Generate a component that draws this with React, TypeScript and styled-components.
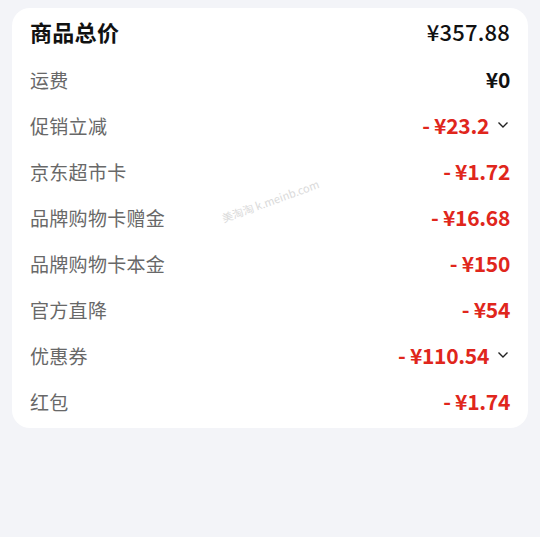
import styled, { createGlobalStyle } from 'styled-components'

const GlobalStyle = createGlobalStyle`
  html, body {
    margin: 0;
    padding: 0;
    background: #f3f4f8;
  }
  body {
    font-family: "Noto Sans CJK SC", "Noto Sans", sans-serif;
  }
`

const Page = styled.div`
  width: 540px;
  height: 537px;
  padding: 8px 12px 0;
  box-sizing: border-box;
  background: #f3f4f8;
`

const Card = styled.div`
  position: relative;
  background: #ffffff;
  border-radius: 18px;
  padding: 2px 18px 4px 18px;
  display: flex;
  flex-direction: column;
`

const Row = styled.div<{ $title?: boolean }>`
  height: 46px;
  display: flex;
  align-items: center;
  justify-content: space-between;
  box-sizing: border-box;
  padding-bottom: ${({ $title }) => ($title ? '4px' : '0')};
`

const Label = styled.span<{ $title?: boolean }>`
  font-size: ${({ $title }) => ($title ? '22px' : '19px')};
  font-weight: ${({ $title }) => ($title ? 700 : 400)};
  color: ${({ $title }) => ($title ? '#111111' : '#686868')};
  letter-spacing: 0.3px;
`

const ValueWrap = styled.div`
  display: flex;
  align-items: center;
  gap: 8px;
`

const Value = styled.span<{ $discount?: boolean; $title?: boolean }>`
  font-size: ${({ $title }) => ($title ? '22px' : '21px')};
  font-weight: ${({ $title }) => ($title ? 500 : 700)};
  color: ${({ $discount }) => ($discount ? '#e0261c' : '#111111')};
  letter-spacing: ${({ $title }) => ($title ? '0.2px' : '-0.3px')};
`

const Chevron = styled.svg`
  width: 12px;
  height: 8px;
  margin-right: 1px;
`

const Watermark = styled.span`
  position: absolute;
  left: 210px;
  top: 202px;
  font-size: 11px;
  color: #dadada;
  transform: rotate(-20deg);
  transform-origin: left center;
  white-space: nowrap;
`

type Item = { label: string; value: string; discount?: boolean; expand?: boolean }

const items: Item[] = [
  { label: '运费', value: '¥0' },
  { label: '促销立减', value: '- ¥23.2', discount: true, expand: true },
  { label: '京东超市卡', value: '- ¥1.72', discount: true },
  { label: '品牌购物卡赠金', value: '- ¥16.68', discount: true },
  { label: '品牌购物卡本金', value: '- ¥150', discount: true },
  { label: '官方直降', value: '- ¥54', discount: true },
  { label: '优惠券', value: '- ¥110.54', discount: true, expand: true },
  { label: '红包', value: '- ¥1.74', discount: true },
]

export default function App() {
  return (
    <Page>
      <GlobalStyle />
      <Card>
        <Row $title>
          <Label $title>商品总价</Label>
          <Value $title>¥357.88</Value>
        </Row>
        {items.map((it) => (
          <Row key={it.label}>
            <Label>{it.label}</Label>
            <ValueWrap>
              <Value $discount={it.discount}>{it.value}</Value>
              {it.expand && (
                <Chevron viewBox="0 0 12 8">
                  <path d="M1.5 1.5 L6 6 L10.5 1.5" fill="none" stroke="#222" strokeWidth="1.4" />
                </Chevron>
              )}
            </ValueWrap>
          </Row>
        ))}
        <Watermark>美淘淘 k.meinb.com</Watermark>
      </Card>
    </Page>
  )
}
